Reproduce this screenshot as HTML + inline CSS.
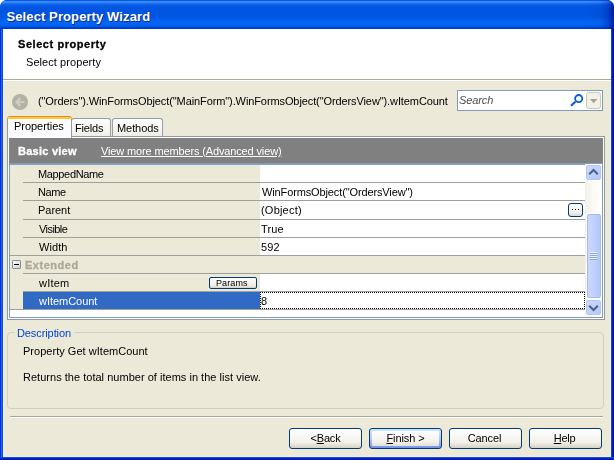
<!DOCTYPE html>
<html><head><meta charset="utf-8">
<style>
*{box-sizing:border-box;margin:0;padding:0}
html,body{width:614px;height:460px;overflow:hidden;background:#fff}
body{font-family:"Liberation Sans",sans-serif;font-size:11px;color:#000;position:relative}
div{position:absolute}
#win{left:0;top:0;width:614px;height:460px;background:#0b3ddf;border-radius:7px 7px 0 0;overflow:hidden}
#title{left:0;top:0;width:614px;height:29px;background:linear-gradient(to bottom,#0a58e0 0.5px,#3c8cff 1.5px,#2e84fa 2.5px,#1a72f3 3.5px,#0b63ea 4.5px,#0558e4 6px,#0054e0 10px,#0055e2 17px,#0360f0 20px,#0465f6 22.5px,#0463f4 25px,#0052e2 27px,#0038c0 28.5px)}
#titleshade{left:584px;top:0;width:30px;height:29px;background:linear-gradient(to right,rgba(0,30,160,0) 0,rgba(0,30,160,.08) 55%,rgba(0,25,150,.35) 80%,rgba(0,15,130,.8) 100%)}
#title span{position:absolute;left:6.5px;top:9px;font-weight:bold;font-size:13px;line-height:15px;color:#fff;text-shadow:1px 1px 0 #0f2d86;white-space:nowrap;letter-spacing:0.1px}
#lb{left:0;top:29px;width:3px;height:431px;background:linear-gradient(to right,#062cd6 0,#062cd6 1px,#1266f0 1px,#1266f0 2px,#084ce4 2px)}
#rb{left:611px;top:29px;width:3px;height:431px;background:linear-gradient(to right,#0a40e0 0,#0a40e0 1px,#0020c0 1px,#0020c0 2px,#001090 2px)}
#bb{left:0;top:457px;width:614px;height:3px;background:linear-gradient(to bottom,#0a4ae8 0,#0a4ae8 1px,#0028c8 1px,#0028c8 2px,#001498 2px)}
#client{left:3px;top:29px;width:608px;height:428px;background:#ece9d8}
#hdr{left:3px;top:29px;width:608px;height:50px;background:#fff}
.t{white-space:nowrap;line-height:13px;height:13px;will-change:transform}
.b{font-weight:bold;-webkit-text-stroke:0.3px}
.hl{height:1px}
</style></head><body>
<div id="win">
<div id="client"></div>
<div style="left:3px;top:80px;width:608px;height:377px;border:1px solid #f6f1de;border-top:none"></div>
<div id="hdr"></div>
<div id="title"><span>Select Property Wizard</span></div>
<div id="titleshade"></div>
<div id="lb"></div><div id="rb"></div><div id="bb"></div>

<div class="t b" style="left:18px;top:38px;letter-spacing:0.56px">Select property</div>
<div class="t" style="left:26px;top:56px;letter-spacing:0.07px">Select property</div>
<div class="hl" style="left:3px;top:79px;width:608px;background:#aca899"></div>
<div class="hl" style="left:3px;top:80px;width:608px;background:#fff"></div>

<!-- back icon -->
<svg style="position:absolute;left:11px;top:93px" width="18" height="18" viewBox="0 0 18 18">
 <circle cx="9" cy="9" r="8" fill="#b3b0a4"/>
 <path d="M9.4 4.9 L5.3 9 L9.4 13.1 M6 9 L13.4 9" fill="none" stroke="#cfccc1" stroke-width="2.1" stroke-linejoin="miter"/>
</svg>
<div class="t" id="path" style="left:38px;top:95px;letter-spacing:-0.1px">("Orders").WinFormsObject("MainForm").WinFormsObject("OrdersView").wItemCount</div>

<!-- search -->
<div style="left:457px;top:90px;width:146px;height:21px;background:#fff;border:1px solid #7f9db9"></div>
<div class="t" style="left:459px;top:94px;font-style:italic;color:#4c4c4c;font-size:11px;letter-spacing:-0.1px">Search</div>
<svg style="position:absolute;left:569px;top:93px" width="15" height="15" viewBox="0 0 15 15">
 <path d="M6.4 8.8 L2 12.8" stroke="#0f58e2" stroke-width="2.2"/>
 <circle cx="9.7" cy="5.6" r="3.6" fill="#f4f9ff" stroke="#0f58e2" stroke-width="1.8"/>
</svg>
<div style="left:586px;top:92px;width:15px;height:17px;background:#f2f1e7;border:1px solid #cbc8b8;border-radius:3px"></div>
<svg style="position:absolute;left:590px;top:99px" width="8" height="5" viewBox="0 0 8 5"><path d="M0 0 L7.4 0 L3.7 4.2 Z" fill="#a5a294"/></svg>

<!-- tab pane -->
<div style="left:7px;top:136px;width:598px;height:184px;background:#fcfcfe;border:1px solid #919b9c"></div>
<!-- tabs -->
<div style="left:71px;top:118px;width:40px;height:19px;background:linear-gradient(#fefefd,#f4f3ec 75%,#eeece0);border:1px solid #919fad;border-bottom:none;border-radius:3px 3px 0 0"></div>
<div style="left:112px;top:118px;width:51px;height:19px;background:linear-gradient(#fefefd,#f4f3ec 75%,#eeece0);border:1px solid #919fad;border-bottom:none;border-radius:3px 3px 0 0"></div>
<div class="hl" style="left:72px;top:136px;width:92px;background:#919b9c"></div>
<div style="left:7px;top:117px;width:65px;height:21px;background:#fcfcfe;border:1px solid #919b9c;border-top:none;border-bottom:none"></div>
<div style="left:7px;top:116px;width:65px;height:3px;background:linear-gradient(#e68b2c 0,#e68b2c 1px,#ffc73c 1px);border-radius:3px 3px 0 0"></div>
<div class="t" style="left:14px;top:120px;letter-spacing:-0.044px">Properties</div>
<div class="t" style="left:75px;top:122px;letter-spacing:-0.15px">Fields</div>
<div class="t" style="left:117px;top:122px;letter-spacing:-0.072px">Methods</div>

<!-- gray band -->
<div style="left:9px;top:138px;width:594px;height:25px;background:#808080"></div>
<div class="t b" style="left:18px;top:145px;color:#fff;letter-spacing:0.253px">Basic view</div>
<div class="t" style="left:101px;top:145px;color:#fff;text-decoration:underline;letter-spacing:-0.138px">View more members (Advanced view)</div>

<!-- grid -->
<div style="left:9px;top:163px;width:594px;height:155px;background:#fff;border:1px solid #7f9db9"></div>
<div style="left:10px;top:164px;width:250px;height:146px;background:#ece9d8"></div>
<div style="left:260px;top:256px;width:325px;height:17px;background:#ece9d8"></div>
<div style="left:23px;top:292px;width:237px;height:17px;background:#316ac5"></div>
<div class="hl" style="left:10px;top:164px;width:592px;background:#86a2bd"></div>
<!-- lines -->
<div class="hl" style="left:23px;top:182px;width:562px;background:#a0a09a"></div>
<div class="hl" style="left:23px;top:200px;width:562px;background:#a0a09a"></div>
<div class="hl" style="left:23px;top:219px;width:562px;background:#a0a09a"></div>
<div class="hl" style="left:23px;top:237px;width:562px;background:#a0a09a"></div>
<div class="hl" style="left:10px;top:255px;width:575px;background:#a0a09a"></div>
<div class="hl" style="left:23px;top:273px;width:562px;background:#a0a09a"></div>
<div class="hl" style="left:10px;top:309px;width:575px;background:#a0a09a"></div>
<!-- focus rect -->
<div class="hl" style="left:23px;top:291px;width:562px;background:#a0a09a"></div>
<div style="left:260px;top:292px;width:325px;height:17px;border:1px dotted #000;background:#fff"></div>

<div class="t" style="left:38px;top:168px;letter-spacing:-0.349px">MappedName</div>
<div class="t" style="left:38px;top:186px;letter-spacing:-0.436px">Name</div>
<div class="t" style="left:38px;top:204px;letter-spacing:-0.037px">Parent</div>
<div class="t" style="left:39px;top:223px;letter-spacing:-0.56px">Visible</div>
<div class="t" style="left:39px;top:241px;letter-spacing:0.075px">Width</div>
<div class="t b" style="left:25px;top:259px;color:#aca899;letter-spacing:0.523px">Extended</div>
<div class="t" style="left:39px;top:277px;letter-spacing:0.231px">wItem</div>
<div class="t" style="left:39px;top:295px;color:#fff;letter-spacing:-0.03px">wItemCount</div>
<div class="t" style="left:262px;top:186px;letter-spacing:-0.125px">WinFormsObject("OrdersView")</div>
<div class="t" style="left:261px;top:204px;letter-spacing:0.209px">(Object)</div>
<div class="t" style="left:261px;top:223px;letter-spacing:0.095px">True</div>
<div class="t" style="left:261px;top:241px;letter-spacing:0.114px">592</div>
<div class="t" style="left:261px;top:295px">8</div>
<!-- minus box -->
<div style="left:12px;top:260px;width:9px;height:9px;border:1px solid #7b93b2;background:linear-gradient(135deg,#fff,#d6d2c2);border-radius:1px"></div>
<div style="left:14px;top:264px;width:5px;height:1px;background:#000"></div>
<!-- params btn -->
<div style="left:209px;top:277px;width:48px;height:12px;border:1px solid #003c74;border-radius:2px;background:linear-gradient(#fff,#ecebe5 80%,#d6d0c5)"></div>
<div class="t" style="left:216px;top:277px;font-size:9px;letter-spacing:0.1px">Params</div>
<!-- ... btn -->
<div style="left:568px;top:203px;width:15px;height:14px;border:1px solid #003c74;border-radius:3px;background:linear-gradient(#fff,#f0efea 70%,#ddd8cc)"></div>
<div style="left:572px;top:209px;width:1px;height:1px;background:#000;box-shadow:3px 0 0 #000,6px 0 0 #000"></div>

<!-- scrollbar -->
<div style="left:585px;top:164px;width:17px;height:153px;background:linear-gradient(to right,#f1efe9,#fbfaf7 50%,#fefefc)"></div>
<div style="left:585px;top:164px;width:17px;height:17px;background:linear-gradient(135deg,#cbdafe,#c0d1fb 50%,#b4c7f5);border:1px solid #fff;border-radius:3px;box-shadow:inset 0 0 0 1px #b3c6f3"></div>
<svg style="position:absolute;left:588px;top:168px" width="11" height="8" viewBox="0 0 11 8"><path d="M1.2 6.3 L5.5 2 L9.8 6.3" fill="none" stroke="#4d6185" stroke-width="2.1"/></svg>
<div style="left:587px;top:214px;width:14px;height:84px;background:linear-gradient(to right,#cad8fe,#bfd0fb 55%,#b3c6f6);border:1px solid #a8bbef;border-radius:2px;box-shadow:0 0 0 1px rgba(255,255,255,.7)"></div>
<div style="left:590px;top:252px;width:7px;height:1px;background:#eef4fe;box-shadow:0 1px 0 #8fa2da,0 2px 0 #eef4fe,0 3px 0 #8fa2da,0 4px 0 #eef4fe,0 5px 0 #8fa2da,0 6px 0 #eef4fe,0 7px 0 #8fa2da"></div>
<div style="left:585px;top:299px;width:17px;height:17px;background:linear-gradient(135deg,#cbdafe,#c0d1fb 50%,#b4c7f5);border:1px solid #fff;border-radius:3px;box-shadow:inset 0 0 0 1px #b3c6f3"></div>
<svg style="position:absolute;left:588px;top:304px" width="11" height="8" viewBox="0 0 11 8"><path d="M1.2 1.7 L5.5 6 L9.8 1.7" fill="none" stroke="#4d6185" stroke-width="2.1"/></svg>

<!-- group box -->
<div style="left:7px;top:332px;width:597px;height:77px;border:1px solid #d0d0bf;border-radius:4px"></div>
<div class="t" style="left:15px;top:327px;width:59px;background:#ece9d8;color:#0046d5;padding-left:2px;letter-spacing:-0.094px">Description</div>
<div class="t" style="left:23px;top:345px;letter-spacing:0.026px">Property Get wItemCount</div>
<div class="t" style="left:23px;top:371px;letter-spacing:0.022px">Returns the total number of items in the list view.</div>

<!-- separator -->
<div class="hl" style="left:10px;top:416px;width:593px;background:#aca899"></div>
<div class="hl" style="left:10px;top:417px;width:593px;background:#fff"></div>

<!-- buttons -->
<div class="btn" style="left:289px"></div>
<div class="btn def" style="left:369px"></div>
<div class="btn" style="left:449px"></div>
<div class="btn" style="left:529px"></div>
<div class="t bt" style="left:289px;letter-spacing:-0.15px">&lt;<u>B</u>ack</div>
<div class="t bt" style="left:369px;letter-spacing:-0.08px"><u>F</u>inish &gt;</div>
<div class="t bt" style="left:448px;letter-spacing:-0.12px">Cancel</div>
<div class="t bt" style="left:528px;letter-spacing:-0.26px"><u>H</u>elp</div>
</div>
<style>
.btn{top:428px;width:73px;height:21px;border:1px solid #003c74;border-radius:3px;background:linear-gradient(#fff,#f2f1ea 70%,#d6d0c5)}
.btn.def{background:linear-gradient(#d2e6ff,#b4caf4 50%,#7394e8)}
.btn.def::after{content:"";position:absolute;left:2px;top:2px;right:2px;bottom:2px;border-radius:1px;background:linear-gradient(#fff,#f3f2ec 70%,#e4e0d6)}
.bt{top:432px;width:73px;text-align:center}
</style>
</body></html>
